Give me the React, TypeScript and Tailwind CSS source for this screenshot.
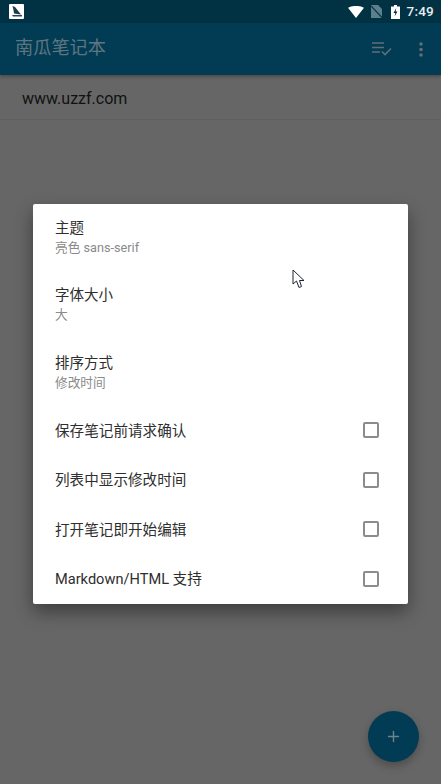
import React from 'react';
import { Plus } from 'lucide-react';

const font = 'font-["Roboto","Noto_Sans_CJK_SC",sans-serif]';

const textRows = [
  { title: '主题', sub: '亮色 sans-serif' },
  { title: '字体大小', sub: '大' },
  { title: '排序方式', sub: '修改时间' },
];

const checkRows = ['保存笔记前请求确认', '列表中显示修改时间', '打开笔记即开始编辑', 'Markdown/HTML 支持'];

function StatusBar() {
  return (
    <div className="h-[23px] bg-[#003244] flex items-center pl-[9px] pr-[7px]">
      <div className="w-[15px] h-[15px] bg-white rounded-[1px] flex items-center justify-center">
        <svg width="13" height="13" viewBox="0 0 13 13">
          <path d="M2.5 1 L5 2 L11 9.5 L4 8.5 L3.5 5 Z" fill="#1d3b4a" />
          <path d="M2 10 H12 V11.5 H3 Z" fill="#27485a" />
        </svg>
      </div>
      <div className="ml-auto flex items-center">
        <svg width="16" height="12" viewBox="0 0 16 12">
          <path d="M0 1.8 Q8 -2 16 1.8 L8 12 Z" fill="#fff" />
        </svg>
        <svg className="ml-[7px]" width="11" height="13" viewBox="0 0 11 13">
          <path d="M0 0 H7 L11 4 V13 H0 Z" fill="#5c7f8c" />
          <path d="M0 1 L11 12.5" stroke="#003244" strokeWidth="1.2" />
        </svg>
        <svg className="ml-[9px]" width="9" height="14" viewBox="0 0 9 14">
          <path d="M3 0 H6 V1.5 H9 V14 H0 V1.5 H3 Z" fill="#fff" />
          <path d="M5.2 3 L2.5 8 H4.3 L3.6 11.5 L6.5 6.5 H4.7 Z" fill="#003244" />
        </svg>
        <span className="ml-[7px] text-[13.5px] leading-none font-medium text-[#e8edef] tracking-[0.2px]">7:49</span>
      </div>
    </div>
  );
}

function AppBar() {
  return (
    <div className="h-[52px] bg-[#013c54] flex items-center pl-[15px] shadow-[0_2px_3px_rgba(0,0,0,0.25)] relative">
      <h1 className="text-[18.2px] leading-none text-[#5f7580] pb-[2px]">南瓜笔记本</h1>
      <div className="ml-auto flex items-center">
        <svg width="20" height="14" viewBox="0 0 20 14" fill="none">
          <path d="M0 1 H12 M0 5.5 H12 M0 10 H8" stroke="#5f6f76" strokeWidth="1.6" />
          <path d="M10 9.5 L13 12.5 L19 6.5" stroke="#5f6f76" strokeWidth="1.6" />
        </svg>
        <svg className="ml-[27px] mr-[18px]" width="4" height="15" viewBox="0 0 4 15">
          <circle cx="2" cy="2" r="1.8" fill="#5f6f76" />
          <circle cx="2" cy="7.5" r="1.8" fill="#5f6f76" />
          <circle cx="2" cy="13" r="1.8" fill="#5f6f76" />
        </svg>
      </div>
    </div>
  );
}

function SettingsDialog() {
  return (
    <div className="absolute inset-x-[33px] top-[204px] bg-white rounded-[2px] shadow-[0_8px_18px_rgba(0,0,0,0.4)]">
      {textRows.map((row) => (
        <div key={row.title} className="h-[67.33px] pl-[22px] flex flex-col justify-center">
          <div className="text-[14.5px] leading-[20px] text-[#2e2e2e]">{row.title}</div>
          <div className="mt-[1px] text-[12.7px] leading-[16px] text-[#8a8a8a]">{row.sub}</div>
        </div>
      ))}
      {checkRows.map((label) => (
        <div key={label} className="h-[49.5px] pl-[22px] pr-[29px] pb-[1px] flex items-center justify-between">
          <span className="pt-[3px] text-[14.6px] text-[#2e2e2e]">{label}</span>
          <span className="w-[16px] h-[16px] border-2 border-[#8c8c8c] rounded-[2px]" />
        </div>
      ))}
    </div>
  );
}

export default function App() {
  return (
    <div className={`${font} relative w-[441px] h-[784px] bg-[#666666] overflow-hidden`}>
      <StatusBar />
      <AppBar />
      <div className="h-[45px] pl-[22px] pt-[4px] flex items-center border-b border-[#5f5f5f] text-[16px] text-[#111111]">
        www.uzzf.com
      </div>

      <SettingsDialog />

      <button className="absolute left-[368px] top-[711px] w-[51px] h-[51px] rounded-full bg-[#013c54] flex items-center justify-center shadow-[0_4px_8px_rgba(0,0,0,0.25)]">
        <Plus size={17} color="#6f838c" strokeWidth={2} />
      </button>

      {/* mouse pointer from the recording */}
      <svg className="absolute left-[292px] top-[269px]" width="13" height="20" viewBox="0 0 13 20">
        <path d="M1 1 V15 L4.5 12 L7 18.5 L9.5 17.5 L7.5 11.5 L12 11.5 Z" fill="#fff" stroke="#1c2433" strokeWidth="1" />
      </svg>
    </div>
  );
}
